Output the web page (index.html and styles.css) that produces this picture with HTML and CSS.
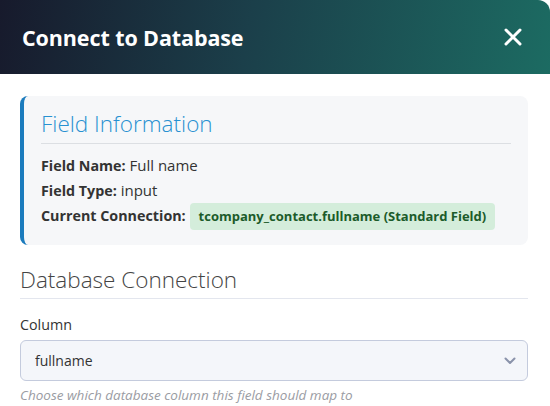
FILE: index.html
```html
<!DOCTYPE html>
<html lang="en">
<head>
    <meta charset="UTF-8">
    <meta name="viewport" content="width=device-width, initial-scale=1.0">
    <title>Connect to Database</title>
    <link rel="stylesheet" href="styles.css">
</head>
<body>
    <div class="modal">
        <div class="modal-header">
            <h2>Connect to Database</h2>
            <button class="close-btn" aria-label="Close">
                <svg width="18" height="18" viewBox="0 0 18 18">
                    <path d="M2 2 L16 16 M16 2 L2 16" stroke="#fff" stroke-width="3" stroke-linecap="round"/>
                </svg>
            </button>
        </div>

        <div class="modal-body">
            <div class="field-info">
                <h3>Field Information</h3>
                <div class="info-row"><strong>Field Name:</strong> Full name</div>
                <div class="info-row"><strong>Field Type:</strong> input</div>
                <div class="info-row"><strong>Current Connection:</strong> <span class="badge">tcompany_contact.fullname (Standard Field)</span></div>
            </div>

            <h4 class="section-title">Database Connection</h4>

            <label class="field-label" for="column">Column</label>
            <div class="select-wrap">
                <select id="column">
                    <option>fullname</option>
                </select>
                <svg class="chevron" width="12" height="8" viewBox="0 0 12 8">
                    <path d="M1.5 1.5 L6 6 L10.5 1.5" fill="none" stroke="#8a93aa" stroke-width="2" stroke-linecap="round" stroke-linejoin="round"/>
                </svg>
            </div>
            <p class="help-text">Choose which database column this field should map to</p>
        </div>
    </div>
</body>
</html>
```

FILE: styles.css
```css
body {
    margin: 0;
    font-family: 'Open Sans', Lato, Arial, sans-serif;
    background-color: #fff;
    color: #333;
    overflow: hidden;
}

.modal {
    width: 550px;
    background: #fff;
    border-top-right-radius: 12px;
    overflow: hidden;
}

.modal-header {
    height: 74px;
    padding: 0 22px;
    display: flex;
    align-items: center;
    justify-content: space-between;
    background: linear-gradient(100deg, #171a2c 0%, #1b3f4a 45%, #1c6b62 100%);
}

.modal-header h2 {
    margin: 0;
    color: #fff;
    font-size: 21.5px;
    font-weight: 700;
    letter-spacing: -0.1px;
}

.close-btn {
    background: none;
    border: 0;
    padding: 0;
    margin-right: 6px;
    cursor: pointer;
    display: flex;
}

.modal-body {
    padding: 22px 22px 0 20px;
}

.field-info {
    background: #f6f7f9;
    border-left: 4px solid #1b7bbd;
    border-radius: 8px;
    padding: 12px 17px 15px 17px;
    margin-bottom: 22px;
}

.field-info h3 {
    margin: 0 0 9px;
    padding-bottom: 4px;
    font-size: 22.5px;
    font-weight: 300;
    line-height: 31px;
    color: #2891d1;
    border-bottom: 1px solid #dcdfe3;
}

.info-row {
    font-size: 15px;
    color: #333;
    line-height: 24px;
}

.info-row strong {
    font-weight: 700;
    font-size: 14.3px;
}

.badge {
    display: inline-block;
    vertical-align: middle;
    padding: 2px 9px;
    background: #d4eddb;
    border-radius: 4px;
    color: #1c5b2a;
    font-size: 13px;
    font-weight: 700;
    line-height: 23px;
}

.section-title {
    margin: 0 0 16px;
    padding-bottom: 5px;
    font-size: 22.5px;
    font-weight: 300;
    line-height: 26px;
    color: #444;
    border-bottom: 1px solid #e3e6ee;
}

.field-label {
    display: block;
    font-size: 14.3px;
    line-height: 20px;
    color: #333;
    margin-bottom: 5px;
}

.select-wrap {
    position: relative;
}

.select-wrap select {
    display: block;
    width: 100%;
    height: 41px;
    padding: 0 14px;
    appearance: none;
    background: #f4f6fa;
    border: 1px solid #c4cbdd;
    border-radius: 6px;
    font-family: inherit;
    font-size: 14px;
    color: #333;
}

.chevron {
    position: absolute;
    right: 12px;
    top: 17px;
}

.help-text {
    margin: 6px 0 0;
    font-size: 13.5px;
    line-height: 17px;
    font-style: italic;
    color: #9a9ca3;
}
```
